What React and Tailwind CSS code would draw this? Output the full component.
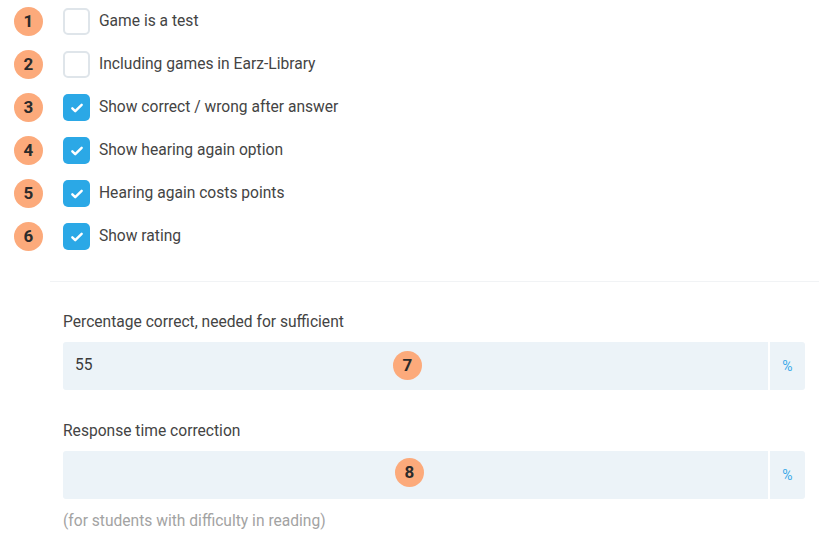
import React from "react";

const font = { fontFamily: "Roboto, 'Liberation Sans', sans-serif" };

function Badge({ n, className = "" }) {
  return (
    <div
      className={`flex h-[29px] w-[29px] items-center justify-center rounded-full bg-[#fcaa7b] text-[17px] font-bold text-[#2b2b2b] ${className}`}
    >
      {n}
    </div>
  );
}

function Check({ checked }) {
  if (checked) {
    return (
      <div className="flex h-[27px] w-[27px] items-center justify-center rounded-[5px] bg-[#2ba8e6]">
        <svg width="14" height="14" viewBox="0 0 24 24" fill="none" stroke="white" strokeWidth="4.2" strokeLinecap="round" strokeLinejoin="round">
          <path d="M4 12.5l5 5L20 6.5" />
        </svg>
      </div>
    );
  }
  return <div className="h-[27px] w-[27px] rounded-[5px] border-2 border-[#dfe5ea] bg-white" />;
}

const rows = [
  ["Game is a test", false],
  ["Including games in Earz-Library", false],
  ["Show correct / wrong after answer", true],
  ["Show hearing again option", true],
  ["Hearing again costs points", true],
  ["Show rating", true],
];

function Input({ value, badge, badgeClass }) {
  return (
    <div className="relative flex h-[48px] rounded-[3px] bg-[#ecf3f8]">
      <div className="flex flex-1 items-center pl-[12px] text-[15.6px] text-[#3a3a3a]">{value}</div>
      <div className="w-[2px] bg-white" />
      <div className="flex w-[35px] items-center justify-center text-[14px] text-[#3aa9e8]">%</div>
      <Badge n={badge} className={`absolute ${badgeClass}`} />
    </div>
  );
}

export default function App() {
  return (
    <div className="h-[541px] w-[819px] overflow-hidden bg-white" style={font}>
      <div className="flex flex-col">
        {rows.map(([label, checked], i) => (
          <div key={i} className="flex h-[43px] items-center">
            <Badge n={i + 1} className="ml-[14px]" />
            <div className="ml-[20px]">
              <Check checked={checked} />
            </div>
            <div className="ml-[9px] text-[15.6px] text-[#444444]">{label}</div>
          </div>
        ))}
      </div>
      <div className="ml-[50px] mt-[23px] border-t border-[#f1f3f5] pl-[13px] pr-[14px] pt-[30px]">
        <div className="h-[20px] text-[15.6px] leading-[20px] text-[#444444]">Percentage correct, needed for sufficient</div>
        <div className="mt-[10px]">
          <Input value="55" badge={7} badgeClass="left-[330px] top-[9px]" />
        </div>
        <div className="mt-[31px] h-[20px] text-[15.6px] leading-[20px] text-[#444444]">Response time correction</div>
        <div className="mt-[10px]">
          <Input value="" badge={8} badgeClass="left-[332px] top-[7px]" />
        </div>
        <div className="mt-[12px] h-[20px] text-[15.6px] leading-[20px] text-[#a3a3a3]">(for students with difficulty in reading)</div>
      </div>
    </div>
  );
}
